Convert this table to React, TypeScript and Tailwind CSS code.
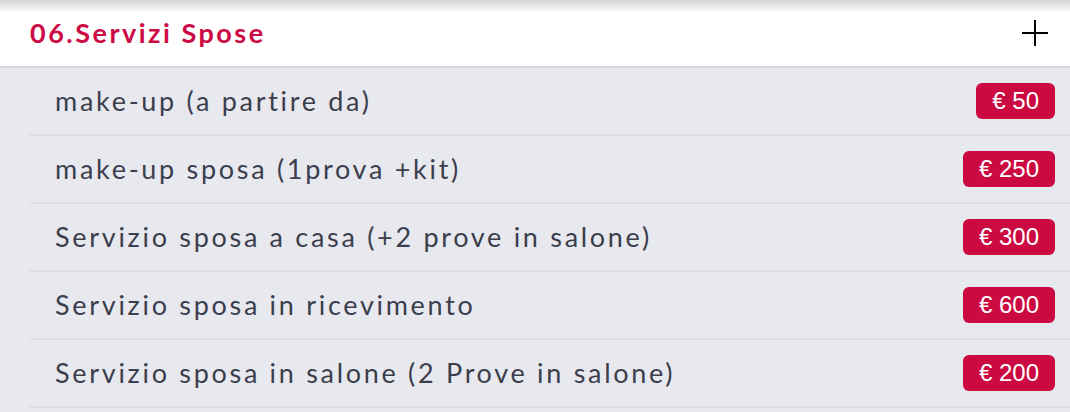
import React from "react";

const services = [
	{ name: "make-up (a partire da)", price: "€ 50" },
	{ name: "make-up sposa (1prova +kit)", price: "€ 250" },
	{ name: "Servizio sposa a casa (+2 prove in salone)", price: "€ 300" },
	{ name: "Servizio sposa in ricevimento", price: "€ 600" },
	{ name: "Servizio sposa in salone (2 Prove in salone)", price: "€ 200" },
];

export default function App() {
	return (
		<div className="w-[1070px] h-[412px] overflow-hidden bg-[#e8e9ef] font-['Lato',sans-serif]">
			<div className="h-[68px] bg-gradient-to-b from-[#d6d6d6] via-white via-[20%] to-white border-b-2 border-[#d6d7db] flex items-center justify-between pl-[30px] pr-[21px]">
				<h2 className="text-[27px] font-bold tracking-[2.5px] text-[#cc0a45] pt-[1px]">06.Servizi Spose</h2>
				<svg width="28" height="28" viewBox="0 0 28 28" className="text-black">
					<path d="M14 1v26M1 14h26" stroke="currentColor" strokeWidth="2" />
				</svg>
			</div>
			<ul className="pl-[30px]">
				{services.map((s) => (
					<li key={s.name} className="h-[68px] flex items-center justify-between border-b-2 border-[#dcdde2] pl-[25px] pr-[15px]">
						<span className="text-[27px] tracking-[2.7px] text-[#3b3e4c]">{s.name}</span>
						<span className="h-[36px] px-[16px] flex items-center rounded-[6px] bg-[#cc0a42] text-white text-[24px] font-['Liberation_Sans',sans-serif]">
							{s.price}
						</span>
					</li>
				))}
			</ul>
		</div>
	);
}
